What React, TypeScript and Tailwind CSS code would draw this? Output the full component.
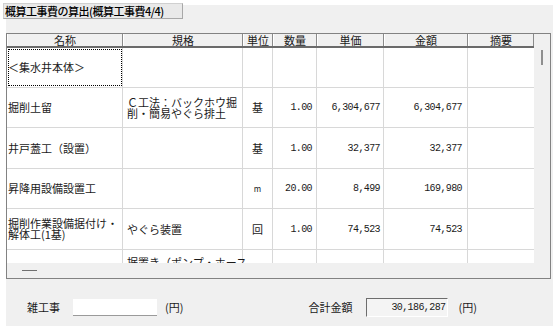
import { Fragment } from 'react';

const jp = "font-['Noto_Sans_CJK_JP',sans-serif]";
const num = "font-['Liberation_Mono',monospace] text-[10px] tracking-[-0.6px]";

type Row = {
  name: string[];
  spec: string[];
  unit: string;
  qty: string;
  price: string;
  amount: string;
  h: string;
};

const rows: Row[] = [
  { name: ['＜集水井本体＞'], spec: [], unit: '', qty: '', price: '', amount: '', h: 'h-[40px]' },
  {
    name: ['掘削土留'],
    spec: ['Ｃ工法：バックホウ掘', '削・簡易やぐら排土'],
    unit: '基',
    qty: '1.00',
    price: '6,304,677',
    amount: '6,304,677',
    h: 'h-[40px]',
  },
  { name: ['井戸蓋工（設置）'], spec: [], unit: '基', qty: '1.00', price: '32,377', amount: '32,377', h: 'h-[41px]' },
  { name: ['昇降用設備設置工'], spec: [], unit: 'm', qty: '20.00', price: '8,499', amount: '169,980', h: 'h-[40px]' },
  {
    name: ['掘削作業設備据付け・', '解体工(1基)'],
    spec: ['やぐら装置'],
    unit: '回',
    qty: '1.00',
    price: '74,523',
    amount: '74,523',
    h: 'h-[41px]',
  },
  {
    name: [],
    spec: ['据置き（ポンプ・ホース'],
    unit: '',
    qty: '',
    price: '',
    amount: '',
    h: 'h-[41px]',
  },
];

const cols = [
  { label: '名称', w: 'w-[116px]' },
  { label: '規格', w: 'w-[120px]' },
  { label: '単位', w: 'w-[30px]' },
  { label: '数量', w: 'w-[44px]' },
  { label: '単価', w: 'w-[67px]' },
  { label: '金額', w: 'w-[84px]' },
  { label: '摘要', w: 'w-[66px]' },
];

function Lines({ lines }: { lines: string[] }) {
  return (
    <div className="leading-[11px] whitespace-nowrap">
      {lines.map((l, i) => (
        <Fragment key={i}>
          {i > 0 && <br />}
          {l}
        </Fragment>
      ))}
    </div>
  );
}

export default function App() {
  return (
    <div className={`w-[560px] h-[328px] bg-white overflow-hidden text-[#1a1a1a] ${jp}`}>
      <div className="ml-[6px] mt-[5px] w-[547px] h-[321px] bg-[#f0f0f0] flex flex-col">
        {/* Title */}
        <div className="-ml-[3px] -mt-[2px] w-[180px] h-[16px] bg-[#e9e9e9] border border-[#d0d0d0] border-r-[#a8a8a8] border-b-[#a8a8a8] pl-[1px] text-[11px] tracking-[-0.5px] leading-[14px] font-medium text-black whitespace-nowrap overflow-hidden">
          概算工事費の算出(概算工事費4/4)
        </div>

        {/* Grid frame */}
        <div className="mt-[14px] w-[545px] h-[246px] border border-[#828282] flex flex-col">
          <div className="flex h-[229px]">
            <div className="w-[527px] flex flex-col">
              {/* Header */}
              <div className="flex h-[14px] border-b-2 border-[#6a6a6a] bg-[#f0f0f0]">
                {cols.map((c) => (
                  <div
                    key={c.label}
                    className={`${c.w} h-full border-r border-[#8a8a8a] border-l border-l-white flex items-center justify-center text-[11px] leading-[12px]`}
                  >
                    {c.label}
                  </div>
                ))}
              </div>

              {/* Body */}
              <div className="h-[215px] overflow-hidden bg-white">
                {rows.map((r, i) => (
                  <div key={i} className={`flex ${r.h} border-b border-[#d8d8d8] text-[11px]`}>
                    <div
                      className={`w-[116px] shrink-0 border-r border-[#d8d8d8] flex items-center pl-[1px] ${
                        i === 0 ? 'outline-1 outline-dotted outline-black -outline-offset-2' : ''
                      }`}
                    >
                      <Lines lines={r.name} />
                    </div>
                    <div
                      className={`w-[120px] shrink-0 border-r border-[#d8d8d8] flex pl-[4px] ${
                        i === rows.length - 1 ? 'items-start pt-[7px]' : 'items-center'
                      }`}
                    >
                      <Lines lines={r.spec} />
                    </div>
                    <div className="w-[30px] shrink-0 border-r border-[#d8d8d8] flex items-center justify-center">
                      <span className={r.unit === 'm' ? 'text-[8px]' : ''}>{r.unit}</span>
                    </div>
                    <div className={`w-[44px] shrink-0 border-r border-[#d8d8d8] flex items-center justify-end pr-[4px] ${num}`}>
                      {r.qty}
                    </div>
                    <div className={`w-[67px] shrink-0 border-r border-[#d8d8d8] flex items-center justify-end pr-[3px] ${num}`}>
                      {r.price}
                    </div>
                    <div className={`w-[84px] shrink-0 border-r border-[#d8d8d8] flex items-center justify-end pr-[5px] ${num}`}>
                      {r.amount}
                    </div>
                    <div className="w-[66px] shrink-0" />
                  </div>
                ))}
              </div>
            </div>

            {/* Vertical scrollbar */}
            <div className="w-[16px] bg-[#f0f0f0] flex justify-center">
              <div className="mt-[16px] w-[2px] h-[15px] bg-[#8e8e8e]" />
            </div>
          </div>

          {/* Horizontal scrollbar strip */}
          <div className="h-[15px] bg-[#f0f0f0] pl-[15px] pt-[7px]">
            <div className="w-[15px] h-px bg-[#707070]" />
          </div>
        </div>

        {/* Footer */}
        <div className="mt-[19px] h-[19px] flex items-center text-[11px] pl-[21px]">
          <span>雑工事</span>
          <div className="ml-[13px] w-[84px] h-[17px] bg-white border-b border-[#9a9a9a]" />
          <span className="ml-[8px]">(円)</span>
          <span className="ml-[125px]">合計金額</span>
          <div
            className={`ml-[14px] w-[82px] h-[19px] bg-[#f4f4f4] border border-white border-l-[#6d6d6d] border-t-[#6d6d6d] flex justify-end items-start pt-[1px] pr-[2px] ${num}`}
          >
            30,186,287
          </div>
          <span className="ml-[10px]">(円)</span>
        </div>
      </div>
    </div>
  );
}
